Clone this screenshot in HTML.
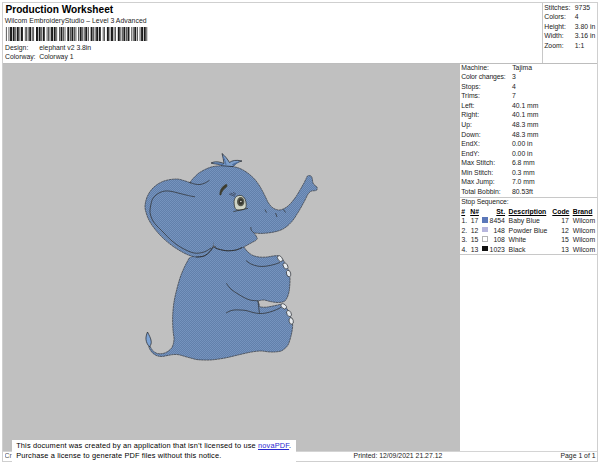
<!DOCTYPE html>
<html>
<head>
<meta charset="utf-8">
<title>Production Worksheet</title>
<style>
html,body{margin:0;padding:0;}
body{width:600px;height:464px;position:relative;overflow:hidden;background:#fff;
  font-family:"Liberation Sans",sans-serif;color:#222;font-size:6.85px;}
.abs{position:absolute;white-space:nowrap;}
.frame{position:absolute;left:2px;top:2px;width:596px;height:460px;border:1px solid #cfcfcf;box-sizing:border-box;}
.hline{position:absolute;height:1px;background:#c8c8c8;}
.vline{position:absolute;width:1px;background:#c8c8c8;}
.gray{position:absolute;left:3px;top:63px;width:456.6px;height:388.5px;background:#c0c0c0;}
</style>
</head>
<body>
<div class="frame"></div>
<div class="gray"></div>
<div class="hline" style="left:3px;top:62.6px;width:594px;background:#bdbdbd;"></div>
<div class="vline" style="left:542px;top:3px;height:60px;"></div>
<div class="hline" style="left:460px;top:196.6px;width:137px;"></div>
<div class="hline" style="left:460px;top:254.2px;width:137px;"></div>
<div class="hline" style="left:3px;top:451px;width:594px;background:#d4d4d4;"></div>
<div class="abs" style="top:3px;font-size:10.15px;line-height:13px;left:5.50px;letter-spacing:-0.010px;font-weight:bold;color:#000;">Production Worksheet</div>
<div class="abs" style="top:16px;font-size:6.85px;line-height:9px;left:4.70px;letter-spacing:0.037px;">Wilcom EmbroideryStudio – Level 3 Advanced</div>
<svg class="abs" style="left:0;top:26.6px;" width="150" height="14.3" viewBox="0 0 150 14.3"><g fill="#1a1a1a"><rect x="5.90" y="0" width="0.72" height="14.3"/><rect x="8.58" y="0" width="0.72" height="14.3"/><rect x="10.02" y="0" width="1.95" height="14.3"/><rect x="12.70" y="0" width="1.95" height="14.3"/><rect x="15.38" y="0" width="0.72" height="14.3"/><rect x="16.82" y="0" width="1.95" height="14.3"/><rect x="19.50" y="0" width="0.72" height="14.3"/><rect x="20.95" y="0" width="1.95" height="14.3"/><rect x="24.86" y="0" width="0.72" height="14.3"/><rect x="26.30" y="0" width="0.72" height="14.3"/><rect x="27.75" y="0" width="0.72" height="14.3"/><rect x="29.20" y="0" width="1.95" height="14.3"/><rect x="31.87" y="0" width="0.72" height="14.3"/><rect x="33.32" y="0" width="0.72" height="14.3"/><rect x="36.00" y="0" width="1.95" height="14.3"/><rect x="38.67" y="0" width="1.95" height="14.3"/><rect x="41.35" y="0" width="0.72" height="14.3"/><rect x="42.80" y="0" width="1.95" height="14.3"/><rect x="46.71" y="0" width="0.72" height="14.3"/><rect x="48.15" y="0" width="0.72" height="14.3"/><rect x="49.60" y="0" width="0.72" height="14.3"/><rect x="51.05" y="0" width="1.95" height="14.3"/><rect x="53.72" y="0" width="1.95" height="14.3"/><rect x="56.40" y="0" width="0.72" height="14.3"/><rect x="59.08" y="0" width="0.72" height="14.3"/><rect x="60.52" y="0" width="1.95" height="14.3"/><rect x="63.20" y="0" width="0.72" height="14.3"/><rect x="64.65" y="0" width="0.72" height="14.3"/><rect x="67.33" y="0" width="1.95" height="14.3"/><rect x="70.00" y="0" width="0.72" height="14.3"/><rect x="71.45" y="0" width="1.95" height="14.3"/><rect x="74.13" y="0" width="0.72" height="14.3"/><rect x="75.57" y="0" width="0.72" height="14.3"/><rect x="78.25" y="0" width="0.72" height="14.3"/><rect x="79.70" y="0" width="1.95" height="14.3"/><rect x="82.37" y="0" width="0.72" height="14.3"/><rect x="83.82" y="0" width="0.72" height="14.3"/><rect x="85.27" y="0" width="1.95" height="14.3"/><rect x="87.95" y="0" width="0.72" height="14.3"/><rect x="90.62" y="0" width="1.95" height="14.3"/><rect x="93.30" y="0" width="0.72" height="14.3"/><rect x="94.75" y="0" width="0.72" height="14.3"/><rect x="96.19" y="0" width="1.95" height="14.3"/><rect x="98.87" y="0" width="1.95" height="14.3"/><rect x="102.78" y="0" width="0.72" height="14.3"/><rect x="104.22" y="0" width="0.72" height="14.3"/><rect x="106.90" y="0" width="1.95" height="14.3"/><rect x="109.58" y="0" width="0.72" height="14.3"/><rect x="111.02" y="0" width="1.95" height="14.3"/><rect x="113.70" y="0" width="0.72" height="14.3"/><rect x="115.15" y="0" width="0.72" height="14.3"/><rect x="117.83" y="0" width="1.95" height="14.3"/><rect x="120.50" y="0" width="0.72" height="14.3"/><rect x="121.95" y="0" width="0.72" height="14.3"/><rect x="123.40" y="0" width="1.95" height="14.3"/><rect x="126.07" y="0" width="0.72" height="14.3"/><rect x="127.52" y="0" width="1.95" height="14.3"/><rect x="131.43" y="0" width="0.72" height="14.3"/><rect x="132.87" y="0" width="0.72" height="14.3"/><rect x="134.32" y="0" width="1.95" height="14.3"/><rect x="137.00" y="0" width="0.72" height="14.3"/><rect x="139.68" y="0" width="0.72" height="14.3"/><rect x="141.12" y="0" width="1.95" height="14.3"/><rect x="143.80" y="0" width="1.95" height="14.3"/><rect x="146.48" y="0" width="0.72" height="14.3"/></g></svg>
<div class="abs" style="top:43px;font-size:6.85px;line-height:9px;left:5.10px;">Design:</div>
<div class="abs" style="top:43px;font-size:6.85px;line-height:9px;left:39.30px;letter-spacing:-0.017px;">elephant v2 3.8in</div>
<div class="abs" style="top:52px;font-size:6.85px;line-height:9px;left:5.10px;">Colorway:</div>
<div class="abs" style="top:52px;font-size:6.85px;line-height:9px;left:39.30px;">Colorway 1</div>
<div class="abs" style="top:3px;font-size:6.85px;line-height:9px;left:544.20px;">Stitches:</div>
<div class="abs" style="top:3px;font-size:6.85px;line-height:9px;left:574.80px;">9735</div>
<div class="abs" style="top:12px;font-size:6.85px;line-height:9px;left:544.20px;">Colors:</div>
<div class="abs" style="top:12px;font-size:6.85px;line-height:9px;left:574.80px;">4</div>
<div class="abs" style="top:22px;font-size:6.85px;line-height:9px;left:544.20px;">Height:</div>
<div class="abs" style="top:22px;font-size:6.85px;line-height:9px;left:574.80px;">3.80 in</div>
<div class="abs" style="top:31px;font-size:6.85px;line-height:9px;left:544.20px;">Width:</div>
<div class="abs" style="top:31px;font-size:6.85px;line-height:9px;left:574.80px;">3.16 in</div>
<div class="abs" style="top:41px;font-size:6.85px;line-height:9px;left:544.20px;">Zoom:</div>
<div class="abs" style="top:41px;font-size:6.85px;line-height:9px;left:574.80px;">1:1</div>
<div class="abs" style="top:63px;font-size:6.85px;line-height:9px;left:461.20px;">Machine:</div>
<div class="abs" style="top:63px;font-size:6.85px;line-height:9px;left:512.20px;">Tajima</div>
<div class="abs" style="top:72px;font-size:6.85px;line-height:9px;left:461.20px;letter-spacing:-0.121px;">Color changes:</div>
<div class="abs" style="top:72px;font-size:6.85px;line-height:9px;left:511.90px;">3</div>
<div class="abs" style="top:82px;font-size:6.85px;line-height:9px;left:461.20px;">Stops:</div>
<div class="abs" style="top:82px;font-size:6.85px;line-height:9px;left:511.90px;">4</div>
<div class="abs" style="top:91px;font-size:6.85px;line-height:9px;left:461.20px;">Trims:</div>
<div class="abs" style="top:91px;font-size:6.85px;line-height:9px;left:511.90px;">7</div>
<div class="abs" style="top:101px;font-size:6.85px;line-height:9px;left:461.20px;">Left:</div>
<div class="abs" style="top:101px;font-size:6.85px;line-height:9px;left:511.90px;">40.1 mm</div>
<div class="abs" style="top:110px;font-size:6.85px;line-height:9px;left:461.20px;">Right:</div>
<div class="abs" style="top:110px;font-size:6.85px;line-height:9px;left:511.90px;">40.1 mm</div>
<div class="abs" style="top:120px;font-size:6.85px;line-height:9px;left:461.20px;">Up:</div>
<div class="abs" style="top:120px;font-size:6.85px;line-height:9px;left:511.90px;">48.3 mm</div>
<div class="abs" style="top:130px;font-size:6.85px;line-height:9px;left:461.20px;">Down:</div>
<div class="abs" style="top:130px;font-size:6.85px;line-height:9px;left:511.90px;">48.3 mm</div>
<div class="abs" style="top:139px;font-size:6.85px;line-height:9px;left:461.20px;">EndX:</div>
<div class="abs" style="top:139px;font-size:6.85px;line-height:9px;left:511.90px;">0.00 in</div>
<div class="abs" style="top:149px;font-size:6.85px;line-height:9px;left:461.20px;">EndY:</div>
<div class="abs" style="top:149px;font-size:6.85px;line-height:9px;left:511.90px;">0.00 in</div>
<div class="abs" style="top:158px;font-size:6.85px;line-height:9px;left:461.20px;">Max Stitch:</div>
<div class="abs" style="top:158px;font-size:6.85px;line-height:9px;left:511.90px;">6.8 mm</div>
<div class="abs" style="top:168px;font-size:6.85px;line-height:9px;left:461.20px;">Min Stitch:</div>
<div class="abs" style="top:168px;font-size:6.85px;line-height:9px;left:511.90px;">0.3 mm</div>
<div class="abs" style="top:177px;font-size:6.85px;line-height:9px;left:461.20px;">Max Jump:</div>
<div class="abs" style="top:177px;font-size:6.85px;line-height:9px;left:511.90px;">7.0 mm</div>
<div class="abs" style="top:187px;font-size:6.85px;line-height:9px;left:461.20px;">Total Bobbin:</div>
<div class="abs" style="top:187px;font-size:6.85px;line-height:9px;left:511.90px;">80.53ft</div>
<div class="abs" style="top:197px;font-size:6.85px;line-height:9px;left:461.30px;letter-spacing:-0.112px;">Stop Sequence:</div>
<div class="abs" style="top:207px;font-size:6.85px;line-height:9px;left:461.30px;font-weight:bold;color:#000;text-decoration:underline;">#</div>
<div class="abs" style="top:207px;font-size:6.85px;line-height:9px;left:470.20px;font-weight:bold;color:#000;text-decoration:underline;">N#</div>
<div class="abs" style="top:207px;font-size:6.85px;line-height:9px;left:496.30px;font-weight:bold;color:#000;text-decoration:underline;">St.</div>
<div class="abs" style="top:207px;font-size:6.85px;line-height:9px;left:508.60px;font-weight:bold;color:#000;text-decoration:underline;">Description</div>
<div class="abs" style="top:207px;font-size:6.85px;line-height:9px;left:552.30px;font-weight:bold;color:#000;text-decoration:underline;">Code</div>
<div class="abs" style="top:207px;font-size:6.85px;line-height:9px;left:572.70px;font-weight:bold;color:#000;text-decoration:underline;">Brand</div>
<div class="abs" style="top:216px;font-size:6.85px;line-height:9px;left:461.50px;">1.</div>
<div class="abs" style="top:216px;font-size:6.85px;line-height:9px;left:470.70px;">17</div>
<div class="abs" style="left:481.5px;top:217.10px;width:6.1px;height:5.8px;background:#5b77b9;box-sizing:border-box;border:0.6px solid #5b77b9;"></div>
<div class="abs" style="top:216px;font-size:6.85px;line-height:9px;right:95.20px;">8454</div>
<div class="abs" style="top:216px;font-size:6.85px;line-height:9px;left:508.60px;">Baby Blue</div>
<div class="abs" style="top:216px;font-size:6.85px;line-height:9px;right:31.20px;">17</div>
<div class="abs" style="top:216px;font-size:6.85px;line-height:9px;left:572.70px;">Wilcom</div>
<div class="abs" style="top:226px;font-size:6.85px;line-height:9px;left:461.50px;">2.</div>
<div class="abs" style="top:226px;font-size:6.85px;line-height:9px;left:470.70px;">12</div>
<div class="abs" style="left:481.5px;top:226.60px;width:6.1px;height:5.8px;background:#b7b6dd;box-sizing:border-box;border:0.6px solid #b7b6dd;"></div>
<div class="abs" style="top:226px;font-size:6.85px;line-height:9px;right:95.20px;">148</div>
<div class="abs" style="top:226px;font-size:6.85px;line-height:9px;left:508.60px;">Powder Blue</div>
<div class="abs" style="top:226px;font-size:6.85px;line-height:9px;right:31.20px;">12</div>
<div class="abs" style="top:226px;font-size:6.85px;line-height:9px;left:572.70px;">Wilcom</div>
<div class="abs" style="top:235px;font-size:6.85px;line-height:9px;left:461.50px;">3.</div>
<div class="abs" style="top:235px;font-size:6.85px;line-height:9px;left:470.70px;">15</div>
<div class="abs" style="left:481.5px;top:236.10px;width:6.1px;height:5.8px;background:#ffffff;box-sizing:border-box;border:0.6px solid #b4b4b4;"></div>
<div class="abs" style="top:235px;font-size:6.85px;line-height:9px;right:95.20px;">108</div>
<div class="abs" style="top:235px;font-size:6.85px;line-height:9px;left:508.60px;">White</div>
<div class="abs" style="top:235px;font-size:6.85px;line-height:9px;right:31.20px;">15</div>
<div class="abs" style="top:235px;font-size:6.85px;line-height:9px;left:572.70px;">Wilcom</div>
<div class="abs" style="top:245px;font-size:6.85px;line-height:9px;left:461.50px;">4.</div>
<div class="abs" style="top:245px;font-size:6.85px;line-height:9px;left:470.70px;">13</div>
<div class="abs" style="left:481.5px;top:245.60px;width:6.1px;height:5.8px;background:#111111;box-sizing:border-box;border:0.6px solid #111111;"></div>
<div class="abs" style="top:245px;font-size:6.85px;line-height:9px;right:95.20px;">1023</div>
<div class="abs" style="top:245px;font-size:6.85px;line-height:9px;left:508.60px;">Black</div>
<div class="abs" style="top:245px;font-size:6.85px;line-height:9px;right:31.20px;">13</div>
<div class="abs" style="top:245px;font-size:6.85px;line-height:9px;left:572.70px;">Wilcom</div>
<svg class="abs" style="left:0;top:0;" width="600" height="464" viewBox="0 0 600 464">
<defs>
<pattern id="tex" width="2" height="2" patternUnits="userSpaceOnUse">
<rect width="2" height="2" fill="#6280ab"/>
<rect width="1" height="1" fill="#7694bf"/>
<rect x="1" y="1" width="1" height="1" fill="#7492bd"/>
</pattern>
</defs>
<path d="M189.0 258.3C188.2 259.9 185.5 264.7 184.0 268.0C182.5 271.3 181.2 274.3 180.0 278.0C178.8 281.7 177.6 286.0 176.6 290.0C175.6 294.0 174.7 297.7 174.0 302.0C173.3 306.3 172.9 311.3 172.7 316.0C172.5 320.7 172.8 326.3 173.0 330.0C173.2 333.7 173.9 335.8 174.0 338.0C174.1 340.2 173.8 341.8 173.4 343.5C173.0 345.2 172.5 346.7 171.6 348.0C170.7 349.3 169.3 350.4 168.0 351.3C166.7 352.2 165.3 352.8 164.0 353.2C162.7 353.6 161.2 353.8 160.0 353.8C158.8 353.8 157.6 353.6 156.5 353.2C155.4 352.8 154.4 352.1 153.5 351.3C152.6 350.5 151.9 349.5 151.3 348.6C150.7 347.7 150.2 346.4 150.0 346.0L148.7 346.6C148.9 347.1 149.4 348.6 150.0 349.6C150.6 350.7 151.6 352.0 152.5 352.9C153.4 353.8 154.4 354.5 155.5 355.1C156.6 355.7 157.8 356.1 159.0 356.3C160.2 356.5 161.5 356.5 163.0 356.4C164.5 356.2 166.3 355.7 168.0 355.4C169.7 355.1 171.5 354.8 173.0 354.6C174.5 354.5 175.7 354.4 177.0 354.5C178.3 354.6 179.5 354.9 181.0 355.3C182.5 355.7 184.2 356.3 186.0 356.8C187.8 357.3 190.0 357.9 192.0 358.4C194.0 358.9 195.0 359.4 198.0 359.7C201.0 360.0 205.7 360.2 210.0 360.0C214.3 359.8 219.3 359.0 224.0 358.2C228.7 357.4 233.7 356.0 238.0 355.0C242.3 354.0 246.3 353.0 250.0 352.3C253.7 351.6 257.0 351.1 260.0 351.0C263.0 350.9 265.7 351.6 268.0 351.8C270.3 352.0 272.2 352.1 274.0 352.0C275.8 351.9 277.5 351.8 279.0 351.5C280.5 351.2 281.5 351.1 283.0 350.0C284.5 348.9 286.7 347.3 288.0 345.0C289.3 342.7 290.2 339.0 291.0 336.0C291.8 333.0 292.4 329.2 292.6 327.0C292.8 324.8 292.4 323.7 292.4 323.0L292.4 323.0C292.2 322.2 291.6 319.9 291.0 318.0C290.4 316.1 289.6 313.5 288.6 311.5C287.6 309.5 286.1 307.2 285.0 306.0C283.9 304.8 282.5 304.3 282.0 304.0L282.0 304.0C280.5 304.3 275.7 305.5 273.0 306.0C270.3 306.5 268.2 307.0 266.0 307.2C263.8 307.4 261.0 307.0 260.0 307.0L260.0 307.0C259.7 306.0 258.3 302.0 258.0 301.0L258.0 300.8C259.0 300.7 262.0 299.9 264.0 300.0C266.0 300.1 267.7 301.1 270.0 301.5C272.3 301.9 275.7 302.5 278.0 302.5C280.3 302.5 282.5 302.2 284.0 301.5C285.5 300.8 286.2 299.6 287.0 298.0C287.8 296.4 288.5 294.2 289.0 292.0C289.5 289.8 289.6 287.3 289.8 285.0C290.0 282.7 290.1 279.8 290.0 278.0C289.9 276.2 289.6 274.7 289.5 274.0L289.5 274.0C289.2 273.2 288.8 270.8 288.0 269.0C287.2 267.2 286.1 264.8 285.0 263.0C283.9 261.2 282.7 259.2 281.5 258.0C280.3 256.8 278.6 255.9 278.0 255.5L278.0 255.5C277.2 255.6 274.8 255.8 273.0 256.0C271.2 256.2 269.3 256.8 267.0 257.0C264.7 257.2 261.5 257.3 259.0 257.0C256.5 256.7 254.0 256.0 252.0 255.0C250.0 254.0 248.3 252.3 247.0 251.0C245.7 249.7 244.5 247.7 244.0 247.0L244.0 247.0C241.7 246.7 235.7 244.8 230.0 245.0C224.3 245.2 216.8 245.8 210.0 248.0C203.2 250.2 192.5 256.6 189.0 258.3Z" fill="url(#tex)" stroke="#2e3138" stroke-width="0.65" stroke-linejoin="round" stroke-dasharray="2.4 0.4"/>
<path d="M190.0 182.6C188.8 182.2 185.3 180.9 183.0 180.3C180.7 179.7 179.2 178.9 176.0 179.0C172.8 179.1 167.7 179.7 164.0 181.0C160.3 182.3 156.8 184.5 154.0 187.0C151.2 189.5 149.0 192.8 147.5 196.0C146.0 199.2 145.2 203.0 145.0 206.0C144.8 209.0 145.7 211.3 146.5 214.0C147.3 216.7 148.4 219.2 150.0 222.0C151.6 224.8 153.7 227.7 156.0 230.5C158.3 233.3 161.0 236.2 164.0 239.0C167.0 241.8 170.3 244.5 174.0 247.0C177.7 249.5 182.3 252.3 186.0 254.0C189.7 255.7 193.0 256.7 196.0 257.0C199.0 257.3 201.7 256.9 204.0 256.0C206.3 255.1 208.5 253.0 210.0 251.5C211.5 250.0 212.3 248.6 213.0 247.0C213.7 245.4 213.8 242.8 214.0 242.0L214.0 242.0C214.2 238.3 216.5 227.3 215.0 220.0C213.5 212.7 209.2 204.2 205.0 198.0C200.8 191.8 192.5 185.2 190.0 182.6Z" fill="url(#tex)" stroke="#2e3138" stroke-width="0.65" stroke-linejoin="round" stroke-dasharray="2.4 0.4"/>
<path d="M190.0 182.4C190.5 181.8 192.0 179.7 193.0 178.6C194.0 177.5 194.9 176.6 196.0 175.6C197.1 174.6 197.8 173.7 199.5 172.6C201.2 171.5 203.8 170.0 206.0 169.0C208.2 168.0 210.3 167.2 213.0 166.6C215.7 166.0 219.5 165.9 222.0 165.7C224.5 165.5 226.2 165.5 228.0 165.6C229.8 165.7 231.0 166.0 233.0 166.5C235.0 167.0 237.7 167.5 240.0 168.5C242.3 169.5 244.7 170.8 247.0 172.5C249.3 174.2 252.0 176.4 254.0 178.5C256.0 180.6 257.5 182.8 259.0 185.0C260.5 187.2 261.8 189.8 263.0 192.0C264.2 194.2 265.1 196.2 266.0 198.0C266.9 199.8 267.3 201.3 268.5 203.0C269.7 204.7 271.1 206.8 273.0 208.0C274.9 209.2 277.5 210.3 280.0 210.0C282.5 209.7 285.5 208.0 288.0 206.0C290.5 204.0 293.0 200.7 295.0 198.0C297.0 195.3 298.5 192.5 300.0 190.0C301.5 187.5 302.9 185.0 304.0 183.0C305.1 181.0 306.0 178.8 306.4 178.0L306.4 178.0C306.6 177.7 307.0 176.4 307.5 176.0C308.0 175.6 308.7 175.5 309.4 175.6C310.1 175.7 311.0 175.9 311.5 176.5C312.0 177.1 312.1 177.9 312.3 179.0C312.6 180.1 312.6 181.9 313.0 183.0C313.4 184.1 314.3 184.8 315.0 185.5C315.7 186.2 316.7 186.3 317.0 187.0C317.3 187.7 317.2 188.9 317.0 189.5C316.8 190.1 316.6 190.3 315.6 190.6C314.6 190.9 312.3 190.6 311.0 191.2C309.7 191.8 308.5 193.5 308.0 194.0L308.0 194.0C307.3 195.3 305.7 198.9 304.0 202.0C302.3 205.1 300.1 209.2 298.0 212.5C295.9 215.8 294.0 219.2 291.5 222.0C289.0 224.8 286.1 227.3 283.0 229.0C279.9 230.7 276.5 231.5 273.0 232.2C269.5 232.9 265.2 233.3 262.0 233.4C258.8 233.5 255.3 233.1 254.0 233.0L254.0 233.0C254.4 233.5 255.6 235.1 256.2 236.0C256.8 236.9 257.1 238.2 257.3 238.6L257.3 238.6C257.0 238.9 256.6 239.9 255.6 240.6C254.5 241.3 252.6 242.1 251.0 243.0C249.4 243.9 247.5 245.0 246.0 245.8C244.5 246.6 243.7 247.1 242.0 247.8C240.3 248.5 238.3 249.5 236.0 250.0C233.7 250.5 230.3 250.8 228.0 250.8C225.7 250.8 224.0 250.5 222.0 250.0C220.0 249.5 217.3 249.3 216.0 248.0C214.7 246.7 214.3 243.0 214.0 242.0L214.0 242.0C213.7 239.2 213.7 232.0 212.0 225.0C210.3 218.0 207.7 207.1 204.0 200.0C200.3 192.9 192.3 185.5 190.0 182.6Z" fill="url(#tex)" stroke="#2e3138" stroke-width="0.65" stroke-linejoin="round" stroke-dasharray="2.4 0.4"/>
<path d="M190.6 183.4 L204 176 L222 200 L240 244 L214 246 L210 226 Z" fill="url(#tex)"/>
<path d="M189 257 L196 258.6 L205 257.6 L214 249 L224 252 L236 251.4 L244 248.5 L246 252 L230 262 L200 266 Z" fill="url(#tex)"/>
<path d="M195.0 196.8C194.2 196.7 192.0 196.3 190.5 196.0C189.0 195.7 188.1 195.5 186.0 195.0C183.9 194.5 180.5 193.6 178.0 193.0C175.5 192.4 173.2 191.6 171.0 191.3C168.8 191.0 166.8 190.8 165.0 191.0C163.2 191.2 161.5 191.8 160.0 192.5C158.5 193.2 157.2 193.9 156.0 195.0C154.8 196.1 153.3 197.5 152.5 199.0C151.7 200.5 151.4 202.2 151.0 204.0C150.6 205.8 150.1 208.2 150.0 210.0C149.9 211.8 150.0 213.2 150.5 215.0C151.0 216.8 151.9 219.2 153.0 221.0C154.1 222.8 155.3 224.2 157.0 226.0C158.7 227.8 160.5 229.5 163.0 232.0C165.5 234.5 168.8 238.3 172.0 241.0C175.2 243.7 178.3 246.0 182.0 248.0C185.7 250.0 190.3 252.3 194.0 253.0C197.7 253.7 201.2 252.8 204.0 252.0C206.8 251.2 209.8 248.7 211.0 248.0" fill="none" stroke="#2b2b2b" stroke-width="0.7" />
<path d="M246.0 260.5C246.8 261.1 249.0 263.1 251.0 264.0C253.0 264.9 255.5 265.8 258.0 266.2C260.5 266.6 263.3 266.5 266.0 266.2C268.7 265.9 271.7 265.1 274.0 264.5C276.3 263.9 279.0 262.8 280.0 262.5" fill="none" stroke="#2b2b2b" stroke-width="0.7" />
<path d="M226.4 283.2C226.8 283.8 227.7 285.4 228.6 286.5C229.5 287.6 230.4 288.8 232.0 290.0C233.6 291.2 236.0 292.8 238.0 294.0C240.0 295.2 242.0 296.5 244.0 297.5C246.0 298.5 247.7 299.4 250.0 300.0C252.3 300.6 256.7 300.7 258.0 300.8" fill="none" stroke="#2b2b2b" stroke-width="0.7" />
<path d="M226.0 313.0C226.7 312.7 228.7 311.5 230.0 311.0C231.3 310.5 232.3 310.2 234.0 310.0C235.7 309.8 238.0 309.9 240.0 310.0C242.0 310.1 243.8 310.1 246.0 310.5C248.2 310.9 250.8 312.0 253.0 312.5C255.2 313.0 257.3 313.4 259.5 313.5C261.7 313.6 263.8 313.4 266.0 313.0C268.2 312.6 270.8 311.8 273.0 311.0C275.2 310.2 277.5 309.2 279.0 308.5C280.5 307.8 281.5 306.8 282.0 306.5" fill="none" stroke="#2b2b2b" stroke-width="0.7" />
<path d="M258.0 301.0C258.2 303.1 259.2 311.4 259.5 313.5" fill="none" stroke="#2b2b2b" stroke-width="0.7" />
<path d="M250.8 227.0C250.9 227.5 250.8 229.2 251.3 230.2C251.8 231.2 253.6 232.5 254.0 233.0" fill="none" stroke="#2b2b2b" stroke-width="0.7" />
<path d="M265.0 209.5C265.2 210.0 266.2 212.0 266.5 212.5" fill="none" stroke="#2b2b2b" stroke-width="0.7" />
<path d="M275.5 213.0C275.8 213.7 276.8 216.3 277.0 217.0" fill="none" stroke="#2b2b2b" stroke-width="0.7" />
<path d="M283.5 209.5C283.8 210.0 285.2 212.0 285.5 212.5" fill="none" stroke="#2b2b2b" stroke-width="0.7" />
<path d="M196.0 257.0C197.3 256.8 201.7 256.9 204.0 256.0C206.3 255.1 208.5 253.0 210.0 251.5C211.5 250.0 212.0 247.5 213.0 247.0C214.0 246.5 214.5 247.8 216.0 248.3C217.5 248.8 220.0 249.6 222.0 250.0C224.0 250.4 225.7 250.8 228.0 250.8C230.3 250.8 233.7 250.6 236.0 250.0C238.3 249.4 241.0 247.9 242.0 247.5" fill="none" stroke="#2b2b2b" stroke-width="0.75" />
<path d="M190.0 182.4C190.8 182.7 193.3 183.8 195.0 184.1C196.7 184.4 198.3 184.7 200.0 184.5C201.7 184.3 203.4 183.7 205.0 183.0C206.6 182.3 208.8 180.7 209.5 180.2" fill="none" stroke="#2b2b2b" stroke-width="0.7" />
<path d="M147.5 332C146.4 334.5 145.7 337.5 146 339.6C146.4 342.5 147.6 345 149.4 346.6C150.8 345.2 151.5 343.4 151.2 341.2C150.8 338 149 335 147.5 332Z" fill="#7da3d4" stroke="#1f2228" stroke-width="0.7"/>
<path d="M222 165.7 C220 164.5 216 163.8 213 163.6 L211 163 C213.5 161.8 217 161.3 221 162.5 L224 163.5 C223.5 160 223 157 222 153.5 C225 156 227.5 159 229.5 162.5 C232 160.5 236 159.6 242 161 C239 161.6 236.5 163 234.5 165 L233 166.6 Z" fill="#7c9ecb" stroke="#1f2228" stroke-width="0.7" stroke-linejoin="round"/>
<path d="M213 163.4C216 163.9 219.5 164.4 222.5 165.4L224 164C220.5 163.2 216.5 163 213 163.4Z" fill="#4f6f9f"/>
<path d="M233.5 166.2C235 164.5 237.5 162.6 240.5 161.4C237.5 161.6 234.5 162.5 232 164.5Z" fill="#4f6f9f"/>
<path d="M223 156.5C224.5 159 225.5 162 226 165" fill="none" stroke="#4d6d9f" stroke-width="1"/>
<path d="M219.9 195C219.3 190.6 222.3 185.8 226.4 184.2C227.4 185 227.2 186.4 226.3 187.3C223.6 189.2 221.8 191.6 220.9 195Z" fill="#3d3c2e" stroke="#3d3c2e" stroke-width="0.5" stroke-linejoin="round"/>
<path d="M234.1 203C233.7 198.4 236.4 195.3 240 195.4C243.8 195.5 246.2 199.6 246.2 205C246.2 207.5 245.4 209 243.5 209.5C240.8 210.1 238.2 210.2 236.2 209.6C234.8 208.5 234.2 205.6 234.1 203Z" fill="#cfd4c6" stroke="#2b2b25" stroke-width="0.7"/>
<ellipse cx="240.7" cy="201.7" rx="3.7" ry="4.6" fill="#55574c"/>
<ellipse cx="240.8" cy="201.7" rx="2.1" ry="2.9" fill="#34352e"/>
<circle cx="240.9" cy="201.5" r="0.75" fill="#ecece6"/>
<path d="M233.4 211.6C238 210.4 243 209.4 248 208.4" fill="none" stroke="#2b2b25" stroke-width="0.7"/>
<path d="M235 196.5L229 194M235.3 195.2L230.5 193M236 194.2L233 192.2" fill="none" stroke="#2c3040" stroke-width="0.6"/>
<ellipse cx="280" cy="258.6" rx="2.1" ry="3.3" transform="rotate(-38 280 258.6)" fill="#e6eaee" stroke="#33363b" stroke-width="0.7"/>
<ellipse cx="285.5" cy="266" rx="2.1" ry="3.3" transform="rotate(-30 285.5 266)" fill="#e6eaee" stroke="#33363b" stroke-width="0.7"/>
<ellipse cx="288.6" cy="273.5" rx="2.1" ry="3.3" transform="rotate(-15 288.6 273.5)" fill="#e6eaee" stroke="#33363b" stroke-width="0.7"/>
<ellipse cx="283.7" cy="306.3" rx="2.1" ry="3.2" transform="rotate(-50 283.7 306.3)" fill="#e6eaee" stroke="#33363b" stroke-width="0.7"/>
<ellipse cx="289" cy="313.5" rx="2.1" ry="3.3" transform="rotate(-28 289 313.5)" fill="#e6eaee" stroke="#33363b" stroke-width="0.7"/>
<ellipse cx="291.2" cy="321" rx="2.1" ry="3.3" transform="rotate(-12 291.2 321)" fill="#e6eaee" stroke="#33363b" stroke-width="0.7"/>
</svg>
<div class="abs" style="left:11.7px;top:439.7px;width:284.6px;height:22.6px;background:#fff;"></div>
<div class="abs" style="top:440px;font-size:7.40px;line-height:11px;left:16.20px;letter-spacing:0.154px;color:#000;">This document was created by an application that isn’t licensed to use <span style="color:#2a2ad0;text-decoration:underline;">novaPDF</span>.</div>
<div class="abs" style="top:450px;font-size:7.40px;line-height:11px;left:16.20px;letter-spacing:0.138px;color:#000;">Purchase a license to generate PDF files without this notice.</div>
<div class="abs" style="top:451px;font-size:6.85px;line-height:9px;left:4.60px;color:#555;width:7.2px;overflow:hidden;">Cr</div>
<div class="abs" style="top:451px;font-size:6.85px;line-height:9px;left:353.60px;letter-spacing:0.016px;">Printed: 12/09/2021 21.27.12</div>
<div class="abs" style="top:451px;font-size:6.85px;line-height:9px;left:560.50px;">Page 1 of 1</div>
</body>
</html>
